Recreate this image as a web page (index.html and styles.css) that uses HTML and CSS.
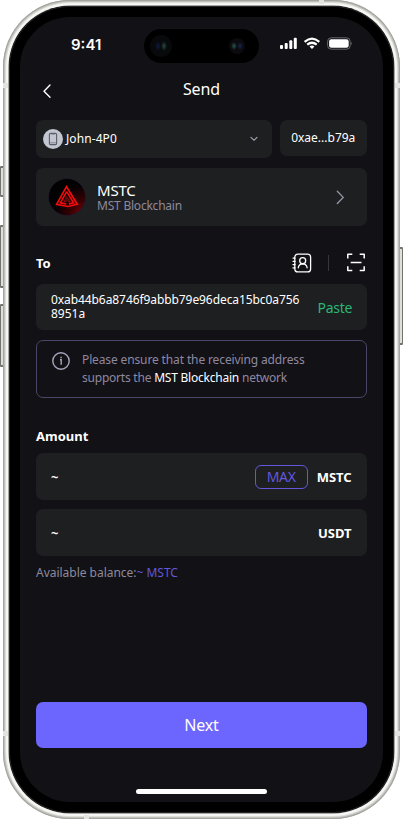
FILE: index.html
```
<!DOCTYPE html>
<html lang="en">
<head>
<meta charset="utf-8">
<title>Send</title>
<link rel="stylesheet" href="styles.css">
</head>
<body>
<div class="device">
  <i class="key action"></i><i class="key vol-up"></i><i class="key vol-down"></i><i class="key power"></i>
  <div class="metal"><i class="band b1"></i><i class="band b2"></i><i class="band b3"></i><i class="band b4"></i><i class="band b5"></i><i class="band b6"></i><div class="bezel"><div class="screen">
    <header class="status">
      <span class="time">9:41</span>
      <div class="island"><i class="lens left"></i><i class="lens"></i></div>
      <svg class="signals" width="74" height="14" viewBox="0 0 74 14" fill="#fff">
        <rect x="0" y="8" width="3" height="4" rx="1"/><rect x="4.7" y="6" width="3" height="6" rx="1"/><rect x="9.3" y="3.3" width="3" height="8.7" rx="1"/><rect x="13.8" y="0.8" width="3" height="11.2" rx="1"/>
        <g fill="none" stroke="#fff" stroke-width="2.2"><path d="M24.6 4.9Q32 -1.5 39.3 4.9"/><path d="M27.2 7.7Q32 3.8 36.7 7.7"/></g><path d="M29.5 9.5Q32 7.6 34.4 9.5L32 12Z"/>
        <rect x="47.6" y=".8" width="22.6" height="11.4" rx="3.6" fill="none" stroke="#66666b"/><rect x="49.1" y="2.2" width="19.6" height="8.6" rx="2.3"/><path d="M71.2 4.7Q73 6.4 71.2 8.2Z" fill="#66666b"/>
      </svg>
    </header>
    <nav class="nav">
      <svg class="back" width="10" height="16" viewBox="0 0 10 16"><path d="M8 2L2 8.3L8 14.2" fill="none" stroke="#fff" stroke-width="1.4" stroke-linecap="round" stroke-linejoin="round"/></svg>
      <h1>Send</h1>
    </nav>
    <main>
      <div class="wallets">
        <div class="card wallet">
          <svg width="20" height="20" viewBox="0 0 20 20"><circle cx="10" cy="10" r="10" fill="#c2c6d0"/><rect x="6.4" y="4.4" width="7.2" height="11.2" rx="1.2" fill="none" stroke="#5b5d64" stroke-width="1.1"/><path d="M8.3 5.2h3.4M7 13.8h6" stroke="#74767e" stroke-width=".8"/></svg>
          <span class="name">John-4P0</span>
          <svg class="down" width="8" height="6" viewBox="0 0 8 6"><path d="M1 1.3L4 4.3L7 1.3" fill="none" stroke="#aaa7ba" stroke-width="1.1" stroke-linecap="round"/></svg>
        </div>
        <div class="card short"><span>0xae...b79a</span></div>
      </div>
      <div class="card token">
        <svg width="38" height="38" viewBox="0 0 38 38"><defs><radialGradient id="coin" cx=".95" cy=".95" r=".78"><stop stop-color="#800006"/><stop offset=".45" stop-color="#380003"/><stop offset="1" stop-color="#020203"/></radialGradient></defs><circle cx="19" cy="19" r="18.5" fill="url(#coin)" stroke="#211a2b" stroke-width=".8"/><g fill="none" stroke="#f30b0b"><path d="M18.5 8.7L8.6 26.4L20 28.5L29.3 26.2Z" stroke-width="1.7"/><path d="M18.7 13.6L12.4 24.9L18.2 25.9M18.7 13.6L25.6 24.8L21 25.9" stroke-width="1.6"/></g><path d="M18.8 18.5L15.9 24L19 22.8L22.4 24.2Z" fill="#4d0707" stroke="#a50b0b" stroke-width=".7"/></svg>
        <div class="coin-text"><b>MSTC</b><span>MST Blockchain</span></div>
        <svg class="next-icon" width="9" height="15" viewBox="0 0 9 15"><path d="M1.3 1.2L7.2 7.4L1.3 13.5" fill="none" stroke="#9996a9" stroke-width="1.3" stroke-linecap="round"/></svg>
      </div>
      <div class="to-head"><h2>To</h2>
        <svg class="book" width="20" height="20" viewBox="0 0 20 20" fill="none" stroke="#fff" stroke-width="1.3" stroke-linecap="round"><rect x="2.8" y="1.1" width="15.8" height="17.8" rx="3"/><circle cx="10.7" cy="7.7" r="3"/><path d="M6.3 14.8Q6.6 10.9 10.7 10.8Q14.8 10.9 15.1 14.8M1 5.1h2M1 8.3h2M1 11.6h2M1 14.9h2"/></svg>
        <i class="rule"></i>
        <svg width="18" height="19" viewBox="0 0 18 19" fill="none" stroke="#fff" stroke-width="1.5" stroke-linejoin="round"><path d="M.8 5.5V1.2H5.3M12.7 1.2H17.2V5.5M17.2 13.3V17.6H12.7M5.3 17.6H.8V13.3M3.7 9.5H14.5"/></svg>
      </div>
      <div class="card address"><p><span class="a1">0xab44b6a8746f9abbb79e96deca15bc0a756</span><span class="a2">8951a</span></p><span class="paste">Paste</span></div>
      <div class="notice">
        <svg width="18" height="18" viewBox="0 0 18 18" fill="none" stroke="#aaa5bd" stroke-width="1.4"><circle cx="9" cy="9" r="8.2"/><path d="M8 7.8H9.2V12.7"/><path d="M9.1 4.8v1.5"/></svg>
        <p><span class="n1">Please ensure that the receiving address</span><span class="n2">supports the <em>MST Blockchain</em> network</span></p>
      </div>
      <h2 class="amount-title">Amount</h2>
      <div class="card field"><b>~</b><span class="max">MAX</span><b class="unit">MSTC</b></div>
      <div class="card field"><b>~</b><b class="unit usdt">USDT</b></div>
      <p class="balance">Available balance:<span>~ MSTC</span></p>
      <button>Next</button>
    </main>
    <i class="home"></i>
  </div></div></div>
</div>
</body>
</html>
```
FILE: styles.css
```
* { box-sizing: border-box; }
html, body { margin: 0; width: 403px; height: 820px; overflow: hidden; background: #fff; }
body { font-family: "Noto Sans", sans-serif; color: #fff; }
svg { display: block; flex: none; }
h1, h2, p { margin: 0; }

/* Device shell */
.device { position: relative; width: 403px; height: 820px; padding: 0 3px; }
.metal { position: relative; width: 397px; height: 819px; padding: 6px; border-radius: 67px; background: #f7f7f5; box-shadow: inset 0 0 0 1px #a3a39f, inset 0 0 1px 2px #bdbdb9, inset 0 0 1px 3px #deded9; }
.bezel { width: 385px; height: 807px; padding: 11px; border-radius: 61px; background: #000; box-shadow: 0 0 0 .5px #555, inset 0 0 0 1px #252525; }
.screen { position: relative; display: flex; flex-direction: column; width: 363px; height: 785px; border-radius: 50px; background: #121116; overflow: hidden; }
.key { position: absolute; width: 4px; border: solid #73736f; border-width: 2px 1px; background: #dededb; border-radius: 1px; }
.action { left: 0; top: 166px; height: 31px; }
.vol-up { left: 0; top: 225px; height: 63px; }
.vol-down { left: 0; top: 304px; height: 63px; }
.power { right: 0; top: 247px; height: 98px; }
.band { position: absolute; background: #e3e3e0; }
.b1, .b2, .b3, .b4 { width: 5px; height: 5px; }
.b1 { left: 0; top: 83px; }
.b2 { right: 0; top: 83px; }
.b3 { left: 0; top: 731px; }
.b4 { right: 0; top: 731px; }
.b5 { right: 76px; top: 0; width: 5px; height: 4px; }
.b6 { left: 81px; bottom: 0; width: 5px; height: 4px; }

/* Status bar */
.status { display: flex; height: 48px; padding: 12px 29px 0 51px; }
.time { width: 73px; padding-top: 6px; font: 600 15px/20px Inter, sans-serif; }
.island { display: flex; justify-content: space-between; width: 115px; height: 34px; padding: 6px 14px 6px 6px; border-radius: 17px; background: #000; }
.lens { width: 22px; height: 22px; border-radius: 50%; background: radial-gradient(ellipse 3px 5px at 14px 11px, #224941, transparent), radial-gradient(ellipse 3px 5px at 8px 11px, #101b40, transparent), #08090b; }
.lens + .lens { width: 16px; height: 16px; margin-top: 3px; background: radial-gradient(ellipse 3px 4px at 5px 8px, #28564e, transparent), radial-gradient(ellipse 3px 4px at 11px 8px, #182456, transparent), #0b0b0d; }
.signals { margin: 8px 0 0 21px; }

/* Navigation */
.nav { display: flex; align-items: center; height: 48px; padding: 0 22px; }
.back { margin-top: 4px; }
.nav h1 { flex: 1; margin-right: 10px; text-align: center; font-size: 16px; line-height: 22px; font-weight: 400; letter-spacing: -.1px; }

main { display: flex; flex-direction: column; padding: 7px 16px 0; }
.card { display: flex; align-items: center; border-radius: 7px; background: #1e1f21; }
.wallets { display: flex; align-items: flex-start; gap: 8px; height: 48px; }
.wallet { width: 235.5px; height: 38px; padding: 0 14px 0 7px; }
.name { margin-left: 3px; font-size: 12px; line-height: 16px; letter-spacing: .08px; }
.down { margin-left: auto; }
.short { flex: 1; height: 36px; justify-content: center; font-size: 12px; line-height: 16px; }
.token { height: 58px; padding: 0 22px 0 12px; }
.coin-text { display: flex; flex-direction: column; margin-left: 11px; }
.coin-text b { font-size: 15px; line-height: 18px; font-weight: 400; letter-spacing: -.2px; }
.coin-text span { font-size: 12px; line-height: 14px; color: #8e8a9d; letter-spacing: -.22px; }
.next-icon { margin-left: auto; }

/* Recipient */
.to-head { display: flex; align-items: center; height: 58px; padding: 15px 2px 0 0; }
h2 { font-size: 13px; line-height: 20px; font-weight: 700; }
.book { margin-left: auto; }
.rule { width: 1px; height: 16px; margin: 0 18px 0 16px; background: #36363c; }
.address { height: 46px; padding: 0 15px; justify-content: space-between; }
.address p { font-size: 12px; line-height: 14px; white-space: nowrap; }
.address p span, .notice p span { display: block; }
.a1 { letter-spacing: -.08px; }
.paste { padding-top: 1px; font-size: 14px; line-height: 20px; color: #28b778; letter-spacing: -.3px; }
.notice { display: flex; height: 58px; margin-top: 10px; padding: 11px 14px 0 15px; border: 1px solid #4d4569; border-radius: 7px; }
.notice p { margin: -1px 0 0 12px; font-size: 12px; line-height: 17.5px; color: #8e88a2; white-space: nowrap; }
.n1 { letter-spacing: -.13px; }
.n2 { letter-spacing: -.22px; }
.notice em { font-style: normal; color: #fff; }

/* Amount */
.amount-title { height: 55px; padding-top: 28px; }
.field { height: 46.5px; margin-bottom: 9.5px; padding: 1px 15.5px 0 15px; font-size: 13px; }
.unit { margin-left: auto; letter-spacing: -.05px; }
.max { width: 53px; height: 24px; margin: 0 9px 0 auto; border: 1px solid #6257db; border-radius: 6px; color: #6257db; font-size: 14px; line-height: 22px; letter-spacing: -.3px; text-align: center; }
.max + .unit { margin-left: 0; }
.balance { margin-top: -1px; font-size: 12px; line-height: 18px; color: #8e8a9d; letter-spacing: -.02px; }
.balance span { color: #6257db; }
button { height: 46px; margin-top: 120px; padding: 0; border: 0; border-radius: 7px; background: #6c66ff; color: #fff; font: 400 16px/22px "Noto Sans", sans-serif; letter-spacing: -.15px; }
.home { position: absolute; left: 116px; bottom: 8px; width: 131px; height: 5px; border-radius: 3px; background: #fff; }
```
